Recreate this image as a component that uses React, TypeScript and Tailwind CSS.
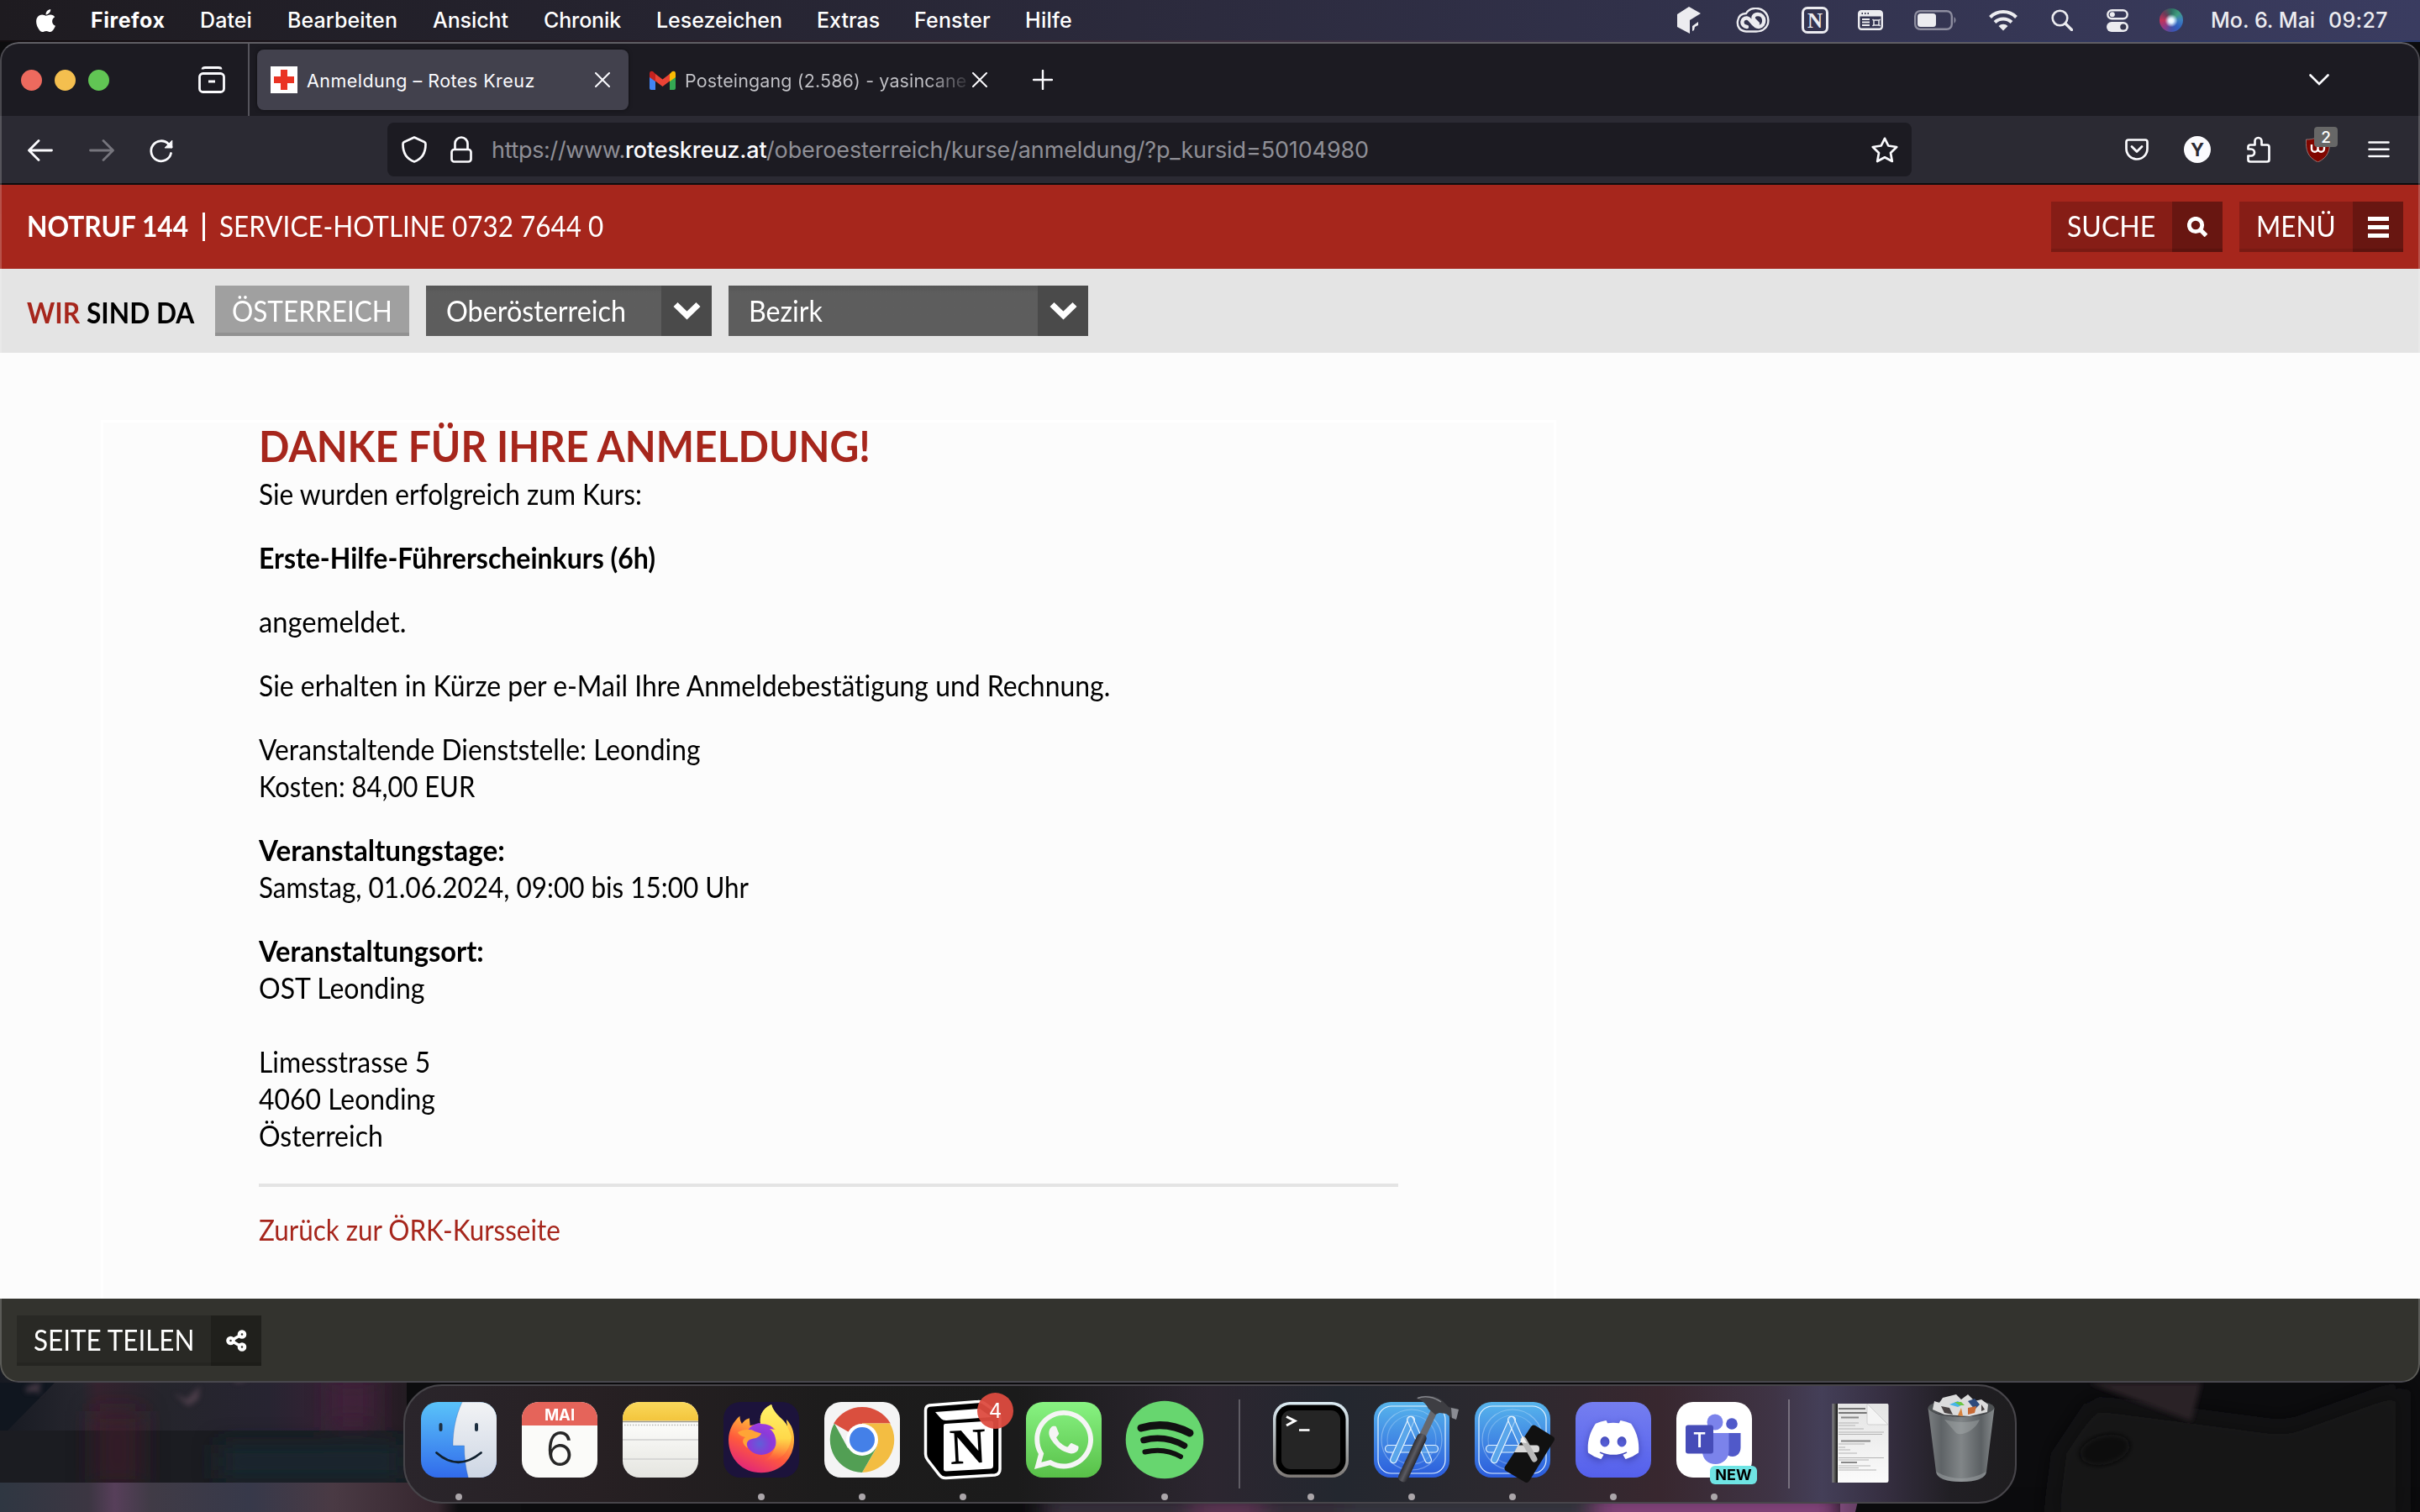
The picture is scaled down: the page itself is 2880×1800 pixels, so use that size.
import React from "react";
import { FaApple, FaDiscord, FaWhatsapp } from "react-icons/fa";

type KidsProps = { className?: string; children?: React.ReactNode };

/* A single line of the site's slightly condensed type. */
function Txt({ className = "", children }: KidsProps) {
  return <span className={`block origin-left whitespace-pre [font-variant-ligatures:none] ${className}`}>{children}</span>;
}

function MenuBar() {
  return (
    <div className="flex h-12 shrink-0 items-center justify-between bg-linear-to-r from-[#1e1b20] via-[#2c2b3e] to-[#3a3c60] pr-[38px] pl-[40px] font-['Inter',sans-serif] text-[25px] leading-[45px] font-medium text-white">
      <div className="flex h-[45px] items-center">
        <FaApple className="mr-[39px] h-[31px] w-[29px] text-white" />
        <div className="flex gap-[42px] whitespace-pre">
          <span className="w-[88px] font-bold tracking-[0.55px]">Firefox</span>
          <span className="w-[62px] tracking-[0.1px]">Datei</span>
          <span className="w-[131px] tracking-[0.1px]">Bearbeiten</span>
          <span className="w-[90px] tracking-[-0.07px]">Ansicht</span>
          <span className="w-[92px] tracking-[-0.14px]">Chronik</span>
          <span className="w-[149px] tracking-[-0.03px]">Lesezeichen</span>
          <span className="w-[74px]">Extras</span>
          <span className="w-[90px] tracking-[0.19px]">Fenster</span>
          <span className="w-[56px] tracking-[0.26px]">Hilfe</span>
        </div>
      </div>
      <div className="flex h-[46px] items-center text-[#ececf0]">
        <svg viewBox="0 0 28 32" className="mr-[42px] h-8 w-7" fill="currentColor">
          <path d="M0 9 L14 0 L28 8 L15 16 L15 32 L0 24 Z" />
          <path d="M18 23 L25 18 V22 L21 24 L20 28 L18 29 Z" />
        </svg>
        <svg viewBox="0 0 40 30" className="mr-[38px] h-[30px] w-10" fill="none" stroke="currentColor">
          <path d="M12 7 C16 0 26 -1 33 4 C40 10 40 20 34 25 C31 28 28 28.5 24 28.5 H12 C4 28 1 22 2 16 C3 10 7 7 12 7 Z" strokeWidth="2.4" />
          <path d="M13 23 C5 22 6 12 13 12.500 C18 13 20 23 27 23 C36 22 35 8 26 8 C21 8 19 12 22 15 L26 19" strokeWidth="4.4" strokeLinecap="round" />
        </svg>
        <span className="mr-[35px] flex h-8 w-8 items-center justify-center rounded-[7px] border-[3px] border-current font-['Liberation_Serif',serif] text-[25px] leading-none font-bold">N</span>
        <svg viewBox="0 0 30 24" className="mr-[37px] h-6 w-[30px]">
          <rect x="1.2" y="1.2" width="27.6" height="21.6" rx="3" fill="none" stroke="currentColor" strokeWidth="2.4" />
          <path d="M1 7.5 V4 A3 3 0 0 1 4 1 H26 A3 3 0 0 1 29 4 V7.5 Z" fill="currentColor" />
          <path d="M5 11 H14 M5 14.5 H14 M5 18 H14" stroke="currentColor" strokeWidth="1.8" />
          <path d="M19 12 h6 v6 h-6 z M17.5 11 l2 2 M26.500 11 l-2 2 M17.500 19 l2 -2 M26.500 19 l-2 -2" fill="none" stroke="currentColor" strokeWidth="1.5" />
          <path d="M4.500 4 h1.500 M8 4 h1.500 M11.500 4 h1.500" stroke="#34344c" strokeWidth="2" />
        </svg>
        <svg viewBox="0 0 51 24" className="mr-[38px] h-6 w-[51px]">
          <rect x="1.200" y="1.200" width="43.600" height="21.600" rx="6" fill="none" stroke="#8d8d9f" strokeWidth="2.400" />
          <rect x="4" y="4" width="22" height="16" rx="3.500" fill="currentColor" />
          <path d="M47.500 8 a5 5 0 0 1 0 8 z" fill="#8d8d9f" />
        </svg>
        <svg viewBox="0 0 34 25" className="mr-[40px] h-[25px] w-[34px]" fill="none" stroke="currentColor" strokeWidth="4">
          <path d="M1.500 8.500 A22 22 0 0 1 32.500 8.500" />
          <path d="M7 14.500 A14.500 14.500 0 0 1 27 14.500" />
          <path d="M17 24.500 L11.500 19 A7.800 7.800 0 0 1 22.500 19 Z" fill="currentColor" stroke="none" />
        </svg>
        <svg viewBox="0 0 26 26" className="mr-[40px] h-[26px] w-[26px]" fill="none" stroke="currentColor" strokeWidth="2.600">
          <circle cx="10.500" cy="10.500" r="8.800" />
          <path d="M17 17 L24.500 24.500" strokeLinecap="round" strokeWidth="3.200" />
        </svg>
        <svg viewBox="0 0 26 27" className="mr-[37px] h-[27px] w-[26px]">
          <rect x="1.300" y="1.300" width="23.400" height="10" rx="5" fill="none" stroke="currentColor" strokeWidth="2.400" />
          <circle cx="6.800" cy="6.300" r="3" fill="currentColor" />
          <rect x="0" y="15" width="26" height="12" rx="6" fill="currentColor" />
          <circle cx="19.800" cy="21" r="3.600" fill="#36374f" />
        </svg>
        <span className="mr-[33px] size-7 rounded-full bg-[radial-gradient(circle_at_50%_52%,#fff_0%,#dff2ff_14%,transparent_38%),conic-gradient(#2f6d63,#3f9e7e,#3d7fc0,#2f5fc0,#4550a8,#903a86,#c2335a,#6b3b58,#2f6d63)]" />
        <span className="mr-[15px] w-[125px] leading-[45px] whitespace-pre">Mo. 6. Mai</span>
        <span className="w-[71px] leading-[45px] tracking-[0.37px]">09:27</span>
      </div>
    </div>
  );
}

function Cross() {
  return (
    <svg viewBox="0 0 18 18" className="size-[18px] shrink-0" stroke="currentColor" strokeWidth="2" strokeLinecap="round">
      <path d="M1 1 L17 17 M17 1 L1 17" />
    </svg>
  );
}

function TabBar() {
  return (
    <div className="flex h-[86px] shrink-0 items-center bg-[#1c1b22] pl-[25px] font-['Inter',sans-serif] text-[21.5px] text-[#fbfbfe]">
      <div className="flex gap-[15px]">
        <span className="size-[25px] rounded-full bg-[#ed6a5e]" />
        <span className="size-[25px] rounded-full bg-[#f4bf4f]" />
        <span className="size-[25px] rounded-full bg-[#61c554]" />
      </div>
      <svg viewBox="0 0 32 32" className="ml-[106px] h-8 w-8" fill="none" stroke="currentColor" strokeWidth="2.800">
        <path d="M5 3.500 Q5 1.500 8 1.500 H24 Q27 1.500 27 3.500" />
        <rect x="1.500" y="8.500" width="29" height="22" rx="4" />
        <path d="M12 18 H20" strokeWidth="3.200" />
      </svg>
      <span className="ml-[27px] h-full w-[2px] bg-[#55545c]" />
      <div className="ml-[9px] flex h-[72px] w-[442px] items-center rounded-lg bg-[#42414d] pr-[22px] pl-[16px] shadow-[0_0_4px_rgba(0,0,0,0.5)]">
        <svg viewBox="0 0 32 32" className="size-8">
          <rect width="32" height="32" fill="#fff" />
          <path d="M12 4 H20 V12 H28 V20 H20 V28 H12 V20 H4 V12 H12 Z" fill="#ea3323" />
        </svg>
        <span className="mt-[3px] ml-[11px] w-[271px] grow whitespace-pre tracking-[0.46px]">Anmeldung – Rotes Kreuz</span>
        <Cross />
      </div>
      <svg viewBox="0 0 31 23" className="ml-[25px] h-[23px] w-[31px]">
        <path d="M0 3 V21 Q0 23 2 23 H7 V9 Z" fill="#4285f4" />
        <path d="M31 3 V21 Q31 23 29 23 H24 V9 Z" fill="#34a853" />
        <path d="M24 4 L27 1 Q31 -0.500 31 4 V8 L24 13 Z" fill="#fbbc04" />
        <path d="M7 4 L15.500 10.500 L24 4 V12.500 L15.500 19 L7 12.500 Z" fill="#ea4335" />
        <path d="M7 4 L4 1 Q0 -0.500 0 4 V8 L7 13 Z" fill="#c5221f" />
      </svg>
      <span className="mt-[3px] ml-[11px] w-[338px] bg-linear-to-r from-[#c3c3c8] from-85% to-[#c3c3c8]/10 bg-clip-text whitespace-pre text-transparent tracking-[0.12px]">
        Posteingang (2.586) - yasincane
      </span>
      <span className="ml-[4px] flex"><Cross /></span>
      <svg viewBox="0 0 24 24" className="ml-[54px] size-6" stroke="currentColor" strokeWidth="2.400" strokeLinecap="round">
        <path d="M12 1 V23 M1 12 H23" />
      </svg>
      <svg viewBox="0 0 24 14" className="mr-[108px] ml-auto h-[14px] w-6" fill="none" stroke="currentColor" strokeWidth="2.600" strokeLinecap="round">
        <path d="M1.500 1.500 L12 12 L22.500 1.500" />
      </svg>
    </div>
  );
}

function NavBar() {
  return (
    <div className="flex h-20 shrink-0 items-center bg-[#2b2a33] pr-[36px] pl-[33px] font-['Inter',sans-serif] text-[27px] text-[#fbfbfe]">
      <svg viewBox="0 0 30 26" className="mt-[2px] h-[26px] w-[30px]" fill="none" stroke="currentColor" strokeWidth="2.800" strokeLinecap="round" strokeLinejoin="round">
        <path d="M13 1.500 L1.500 13 L13 24.500 M2 13 H28.500" />
      </svg>
      <svg viewBox="0 0 30 26" className="mt-[2px] ml-[43px] h-[26px] w-[30px] text-[#76757d]" fill="none" stroke="currentColor" strokeWidth="2.800" strokeLinecap="round" strokeLinejoin="round">
        <path d="M17 1.500 L28.500 13 L17 24.500 M28 13 H1.500" />
      </svg>
      <svg viewBox="0 0 30 30" className="mt-[3px] ml-[41px] size-[30px]" fill="none" stroke="currentColor" strokeWidth="2.800" strokeLinecap="round">
        <path d="M26.500 17.500 A12 12 0 1 1 23.500 6.500 L27 10" />
        <path d="M27.800 2.500 V11 H19.500 Z" fill="currentColor" strokeWidth="1" />
      </svg>
      <div className="ml-[254px] flex h-16 w-[1814px] items-center rounded-lg bg-[#1c1b22] pr-[16px] pl-[17px]">
        <svg viewBox="0 0 30 32" className="h-8 w-[30px]" fill="none" stroke="currentColor" strokeWidth="2.700" strokeLinejoin="round">
          <path d="M15 1.500 L27 7 Q28.500 7.800 28.500 9.500 C28.500 19 25 27 15 30.500 C5 27 1.500 19 1.500 9.500 Q1.500 7.800 3 7 Z" />
        </svg>
        <svg viewBox="0 0 26 32" className="ml-[28px] h-8 w-[26px]" fill="none" stroke="currentColor" strokeWidth="2.700">
          <rect x="1.500" y="16" width="23" height="14.500" rx="3" />
          <path d="M5.500 16 V9 A7.500 7.500 0 0 1 20.500 9 V16" />
        </svg>
        <div className="mt-[3px] ml-[23px] flex grow whitespace-pre text-[#8f8f96]">
          <span className="w-[159px] tracking-[-0.34px]">https://www.</span>
          <span className="w-[168px] font-medium tracking-[-0.15px] text-[#fbfbfe]">roteskreuz.at</span>
          <span className="tracking-[-0.13px]">/oberoesterreich/kurse/anmeldung/?p_kursid=50104980</span>
        </div>
        <svg viewBox="0 0 32 31" className="h-[31px] w-8" fill="none" stroke="currentColor" strokeWidth="2.700" strokeLinejoin="round">
          <path d="M16 1.800 L20.300 10.500 L30.200 12 L23 19 L24.800 29 L16 24.300 L7.200 29 L9 19 L1.800 12 L11.700 10.500 Z" />
        </svg>
      </div>
      <svg viewBox="0 0 28 26" className="ml-auto h-[26px] w-7" fill="none" stroke="currentColor" strokeWidth="2.700" strokeLinecap="round" strokeLinejoin="round">
        <path d="M4 1.500 H24 Q26.500 1.500 26.500 4 V12 A12.500 12.500 0 0 1 1.500 12 V4 Q1.500 1.500 4 1.500 Z M8 9.500 L14 15.500 L20 9.500" />
      </svg>
      <span className="ml-[42px] flex size-8 items-center justify-center rounded-full bg-[#fbfbfe] text-[22px] leading-none font-bold text-[#2b2a33]">Y</span>
      <svg viewBox="0 0 28 32" className="ml-[43px] h-8 w-7" fill="none" stroke="currentColor" strokeWidth="2.700" strokeLinejoin="round">
        <path d="M9.500 10.500 V6 A4 4 0 0 1 17.500 6 V10.500 H24 Q26.500 10.500 26.500 13 V28 Q26.500 30.500 24 30.500 H4 Q1.500 30.500 1.500 28 V23.500 H5 A4 4 0 0 0 5 15.500 H1.500 V13 Q1.500 10.500 4 10.500 Z" />
      </svg>
      <div className="relative ml-[42px] h-[30px] w-[29px]">
        <svg viewBox="0 0 29 30" className="h-[30px] w-[29px]">
          <path d="M14.500 0 C19 2.500 24 3.200 28.500 3 C29 16 27 24 14.500 30 C2 24 0 16 0.500 3 C5 3.200 10 2.500 14.500 0 Z" fill="#800600" stroke="#9a8a8c" strokeWidth="0.800" />
          <path d="M7 9 V14 A3.700 3.700 0 0 0 14.500 14 V9 M14.500 14 A3.700 3.700 0 0 0 22 14 V12" fill="none" stroke="#fff" strokeWidth="2.400" />
        </svg>
        <span className="absolute -top-[12px] left-[10px] flex h-6 w-7 items-center justify-center rounded-[4px] bg-[#676767] text-[19px] leading-none font-medium text-white">2</span>
      </div>
      <svg viewBox="0 0 26 20" className="ml-[45px] h-5 w-[26px]" stroke="currentColor" strokeWidth="2.600" strokeLinecap="round">
        <path d="M1.500 1.500 H24.500 M1.500 9.800 H24.500 M1.500 18 H24.500" />
      </svg>
    </div>
  );
}

function SiteHeader() {
  return (
    <>
      <div className="flex h-[100px] shrink-0 items-center justify-between bg-[#a6261c] pr-5 pl-8 text-white">
        <div className="mt-[-5px] flex h-[40px] items-center leading-[40px]">
          <Txt className="w-[192px] scale-x-[0.906] font-bold">NOTRUF 144</Txt>
          <span className="mx-[17px] mt-1 h-[34px] w-[3px] bg-white" />
          <Txt className="w-[457px] scale-x-[0.898]">SERVICE-HOTLINE 0732 7644 0</Txt>
        </div>
        <div className="flex gap-5 leading-[56px]">
          <div className="flex h-[60px]">
            <div className="h-full w-[144px] border-b-4 border-[#791a13] bg-[#861d16] pl-[19px]">
              <Txt className="scale-x-[0.915]">SUCHE</Txt>
            </div>
            <div className="flex h-full w-[60px] items-center justify-center border-b-4 border-[#5c130e] bg-[#681611] pt-1">
              <svg viewBox="0 0 24 24" className="size-6" fill="none" stroke="#fff">
                <circle cx="10" cy="10" r="7.700" strokeWidth="4.800" />
                <path d="M15.500 15.500 L22.500 22.500" strokeWidth="5.200" />
              </svg>
            </div>
          </div>
          <div className="flex h-[60px]">
            <div className="h-full w-[135px] border-b-4 border-[#791a13] bg-[#861d16] pl-[20px]">
              <Txt className="scale-x-[0.9]">MENÜ</Txt>
            </div>
            <div className="flex h-full w-[60px] flex-col items-center justify-center gap-[5px] border-b-4 border-[#5c130e] bg-[#681611] pt-1">
              <span className="h-[5px] w-[25px] bg-white" />
              <span className="h-[5px] w-[25px] bg-white" />
              <span className="h-[5px] w-[25px] bg-white" />
            </div>
          </div>
        </div>
      </div>
      <div className="flex h-[100px] shrink-0 items-center bg-[#e4e4e4] pl-8 leading-[60px] text-white">
        <div className="mt-[2px] flex font-bold">
          <Txt className="w-[71px] scale-x-[0.905] text-[#a6261c]">WIR</Txt>
          <Txt className="w-[153px] scale-x-[0.905] text-black">SIND DA</Txt>
        </div>
        <div className="h-[60px] w-[231px] border-b-4 border-[#919191] bg-[#a0a0a0] pl-[20px] leading-[58px]">
          <Txt className="scale-x-[0.901]">ÖSTERREICH</Txt>
        </div>
        <Select text="Oberösterreich" className="ml-5 w-[340px]" scale="scale-x-[0.924]" />
        <Select text="Bezirk" className="ml-5 w-[428px]" scale="scale-x-[0.92]" />
      </div>
    </>
  );
}

function Select({ text, className, scale }: { text: string; className: string; scale: string }) {
  return (
    <div className={`flex h-[60px] justify-between bg-linear-to-b from-[#565656] to-[#5d5d5d] to-15% leading-[58px] ${className}`}>
      <Txt className={`pl-[26px] ${scale}`}>{text}</Txt>
      <span className="flex h-full w-[60px] items-center justify-center bg-[#4a4a4a]">
        <svg viewBox="0 0 33 22" className="h-[22px] w-[33px]" fill="none" stroke="#fff" strokeWidth="7.200">
          <path d="M3 3.500 L16.500 16.500 L30 3.500" />
        </svg>
      </span>
    </div>
  );
}

function Content() {
  return (
    <div className="h-[1126px] shrink-0 bg-[#fcfcfc] pt-20 pl-[120px]">
      <div className="h-full w-[1732px] border-3 border-b-0 border-white bg-[#fcfcfc] pr-[185px] pl-[185px] text-black">
        <h1 className="-mt-[3px] h-[65px] text-[52px] leading-[60px] font-bold text-[#a6261c]">
          <Txt className="scale-x-[0.922]">DANKE FÜR IHRE ANMELDUNG!</Txt>
        </h1>
        <div className="flex flex-col gap-8 leading-[44px]">
          <Txt className="scale-x-[0.904]">Sie wurden erfolgreich zum Kurs:</Txt>
          <Txt className="scale-x-[0.914] font-bold">Erste-Hilfe-Führerscheinkurs (6h)</Txt>
          <Txt className="scale-x-[0.935]">angemeldet.</Txt>
          <Txt className="scale-x-[0.912]">Sie erhalten in Kürze per e-Mail Ihre Anmeldebestätigung und Rechnung.</Txt>
          <div>
            <Txt className="scale-x-[0.907]">Veranstaltende Dienststelle: Leonding</Txt>
            <Txt className="scale-x-[0.884]">Kosten: 84,00 EUR</Txt>
          </div>
          <div>
            <Txt className="scale-x-[0.949] font-bold">Veranstaltungstage:</Txt>
            <Txt className="scale-x-[0.899]">Samstag, 01.06.2024, 09:00 bis 15:00 Uhr</Txt>
          </div>
          <div>
            <Txt className="scale-x-[0.933] font-bold">Veranstaltungsort:</Txt>
            <Txt className="scale-x-[0.915]">OST Leonding</Txt>
            <Txt className="mt-[44px] scale-x-[0.91]">Limesstrasse 5</Txt>
            <Txt className="scale-x-[0.911]">4060 Leonding</Txt>
            <Txt className="scale-x-[0.914]">Österreich</Txt>
          </div>
        </div>
        <hr className="mt-[36px] mb-[28px] h-1 border-0 bg-[#e4e4e4]" />
        <a className="block leading-[44px] text-[#a6261c]">
          <Txt className="scale-x-[0.898]">Zurück zur ÖRK-Kursseite</Txt>
        </a>
      </div>
    </div>
  );
}

function SiteFooter() {
  return (
    <div className="flex h-[98px] shrink-0 items-start bg-[#33332e] pt-5 pl-5 leading-[57px] text-white">
      <div className="h-[60px] w-[231px] border-b-4 border-[#252521] bg-[#292925] pl-[20px]">
        <Txt className="scale-x-[0.897]">SEITE TEILEN</Txt>
      </div>
      <div className="flex h-[60px] w-[60px] items-center justify-center border-b-4 border-[#1d1d19] bg-[#20201c] pt-1">
        <svg viewBox="0 0 25 26" className="h-[26px] w-[25px]" fill="none" stroke="#fff" strokeWidth="4">
          <path d="M19 5.500 L6 13 L19 20.500" strokeWidth="3.600" />
          <circle cx="19" cy="5.500" r="3.300" fill="#33332e" />
          <circle cx="19" cy="20.500" r="3.300" fill="#33332e" />
          <circle cx="5.500" cy="13" r="3.300" fill="#33332e" />
        </svg>
      </div>
    </div>
  );
}

/* Blurred night-city wallpaper visible beneath the window. */
function Wallpaper() {
  return (
    <svg viewBox="0 0 2880 180" preserveAspectRatio="none" className="absolute inset-x-0 bottom-0 h-[180px] w-full">
      <defs>
        <filter id="soft" x="-20%" y="-20%" width="140%" height="140%"><feGaussianBlur stdDeviation="14" /></filter>
        <filter id="tiny"><feGaussianBlur stdDeviation="3" /></filter>
        <linearGradient id="band" x1="0" x2="1">
          <stop offset="0" stopColor="#171a22" /><stop offset="0.2" stopColor="#26262e" /><stop offset="0.24" stopColor="#35232f" />
          <stop offset="0.4" stopColor="#25252c" /><stop offset="0.66" stopColor="#272431" /><stop offset="0.86" stopColor="#3a2135" /><stop offset="1" stopColor="#231c22" />
        </linearGradient>
        <linearGradient id="low" x1="0" x2="1">
          <stop offset="0" stopColor="#2f3742" /><stop offset="0.17" stopColor="#3c3642" /><stop offset="0.22" stopColor="#573f5a" />
          <stop offset="0.29" stopColor="#403b46" /><stop offset="0.48" stopColor="#37394a" /><stop offset="0.64" stopColor="#4a3a44" /><stop offset="0.84" stopColor="#35262e" /><stop offset="0.88" stopColor="#0e0e10" />
        </linearGradient>
      </defs>
      <rect width="2880" height="180" fill="#0c0c0e" />
      <rect width="484" height="90" fill="url(#band)" />
      <path d="M0 26 H65 L8 84 H0 Z" fill="#10161f" />
      <rect y="83" width="500" height="62" fill="#1b1c21" />
      <g filter="url(#soft)">
        <rect x="110" y="60" width="60" height="90" fill="#3d1c27" opacity="0.700" />
        <rect x="260" y="100" width="220" height="40" fill="#1b2730" opacity="0.900" />
        <rect x="395" y="20" width="50" height="55" fill="#42223c" opacity="0.800" />
      </g>
      <rect y="145" width="620" height="35" fill="url(#low)" />
      <g fill="#5d4a57" filter="url(#tiny)" opacity="0.700">
        <path d="M206 38 L222 46 L238 30 L236 46 L224 54 Z" />
        <path d="M278 22 Q288 14 297 18 Q292 26 280 26 Z" />
        <path d="M30 32 L40 28 L50 26 L46 34 L50 40 L40 36 L32 38 Z" />
      </g>
      <g filter="url(#soft)">
        <rect x="1240" y="160" width="360" height="40" fill="#3a3040" />
        <rect x="1420" y="166" width="80" height="30" fill="#6a3a5e" />
        <rect x="1600" y="160" width="300" height="40" fill="#3a3a44" />
        <rect x="1900" y="158" width="290" height="40" fill="#8f4a86" />
      </g>
      <path d="M2190 168 H2215 L2208 180 H2190 Z" fill="#a0609c" opacity="0.600" />
      <path d="M2215 150 H2880 V180 H2208 Z" fill="#0b0b0d" />
      <path d="M2450 110 L2490 50 L2720 80 L2860 30 V190 H2440 Z" fill="#121214" filter="url(#soft)" />
      <path d="M2485 26 L2620 26 L2608 72 Z" fill="#292027" filter="url(#tiny)" />
      <ellipse cx="2505" cy="106" rx="30" ry="17" fill="#0a0a0b" filter="url(#tiny)" transform="rotate(-14 2505 106)" />
    </svg>
  );
}

function DockItem({ dot, children }: { dot?: boolean; children: React.ReactNode }) {
  return (
    <div className="relative flex h-full w-[120px] shrink-0 flex-col items-center pt-[14px]">
      <div className="relative size-[100px]">{children}</div>
      {dot && <span className="mt-[14px] size-2 rounded-full bg-[#aba6aa]" />}
    </div>
  );
}

const icon = "block size-[100px] overflow-visible";

function FinderIcon() {
  return (
    <svg viewBox="0 0 100 100" className={icon}>
      <defs>
        <linearGradient id="fb" x2="0" y2="1"><stop stopColor="#5cc8fa" /><stop offset="1" stopColor="#2f66ea" /></linearGradient>
        <linearGradient id="fw" x2="0" y2="1"><stop stopColor="#f2f3f5" /><stop offset="1" stopColor="#cdd6e4" /></linearGradient>
        <clipPath id="tile"><rect x="5" y="5" width="90" height="90" rx="20" /></clipPath>
      </defs>
      <g clipPath="url(#tile)">
        <rect width="100" height="100" fill="url(#fb)" />
        <path d="M54 5 C46 22 43 40 43 57 H56.500 Q56.500 78 61.500 96 H100 V5 Z" fill="url(#fw)" stroke="#2458a8" strokeOpacity="0.400" strokeWidth="0.800" />
      </g>
      <path d="M28.500 32 V38 M71 32 V38" stroke="#1d2f40" strokeWidth="4" strokeLinecap="round" />
      <path d="M23.500 65.500 Q49 88 76.500 65.500" fill="none" stroke="#10202e" strokeWidth="2.800" strokeLinecap="round" />
    </svg>
  );
}

function CalendarIcon() {
  return (
    <svg viewBox="0 0 100 100" className={icon} fontFamily="Inter, sans-serif" textAnchor="middle">
      <g clipPath="url(#tile)">
        <rect width="100" height="100" fill="#fbfbf9" />
        <rect width="100" height="33" fill="#e5645a" />
      </g>
      <text x="50" y="26.500" fontSize="18.500" fontWeight="700" fill="#fff">MAI</text>
      <text x="50" y="81" fontSize="56" fontWeight="300" fill="#262626">6</text>
    </svg>
  );
}

function NotesIcon() {
  return (
    <svg viewBox="0 0 100 100" className={icon}>
      <defs>
        <linearGradient id="ny" x2="0" y2="1"><stop stopColor="#fbdc62" /><stop offset="1" stopColor="#f3c53c" /></linearGradient>
        <linearGradient id="nw" x2="0" y2="1"><stop offset="0.300" stopColor="#fcfcfa" /><stop offset="1" stopColor="#e3e3de" /></linearGradient>
      </defs>
      <g clipPath="url(#tile)">
        <rect width="100" height="100" fill="url(#nw)" />
        <rect width="100" height="27.500" fill="url(#ny)" />
        <path d="M5 28.500 H95" stroke="#9c9a92" strokeWidth="1.500" />
        <path d="M7 32.500 H95" stroke="#b5b5b2" strokeWidth="1.500" strokeDasharray="1.500 1.800" />
        <path d="M5 50 H95 M5 73 H95" stroke="#cfcfd0" strokeWidth="1.500" />
      </g>
    </svg>
  );
}

function FirefoxIcon() {
  return (
    <svg viewBox="0 0 100 100" className={icon}>
      <defs>
        <linearGradient id="ff" x1="0.750" y1="0" x2="0.300" y2="1">
          <stop stopColor="#fff05a" /><stop offset="0.350" stopColor="#ffb13a" /><stop offset="0.650" stopColor="#ff5a3c" /><stop offset="1" stopColor="#e0247c" />
        </linearGradient>
        <linearGradient id="fy" x1="0.500" y1="0" x2="0.500" y2="1">
          <stop stopColor="#fff36a" /><stop offset="0.600" stopColor="#ffd84a" /><stop offset="1" stopColor="#ff9a3a" stopOpacity="0" />
        </linearGradient>
        <radialGradient id="fg" cx="0.450" cy="0.650" r="0.700"><stop stopColor="#5f5fd8" /><stop offset="0.500" stopColor="#8a3ad8" /><stop offset="1" stopColor="#a23be0" /></radialGradient>
      </defs>
      <rect x="5" y="5" width="90" height="90" rx="20" fill="#1c133b" />
      <path d="M62 8 C50 14 48 22 49 31 L36.600 33 L35.800 24.300 C31 26 29 28 27 31 C25 28 24.500 25 24.400 21.700 C17 28 11 38 11 50 C11 73 28 89.300 50 89.300 C73 89.300 89 72 89 50 C89 40 86 32 80 26 C80 30 81 32 81 34 C77 25 65 20 62 8 Z" fill="url(#ff)" />
      <circle cx="50" cy="49" r="19" fill="url(#fg)" />
      <path d="M62 8 C50 14 48 22 49 31 C58 31 64 34 67 38 L60 37 C67 42 69 52 66 60 C63 68 58 72 54 75 C70 78 84 66 86 46 L81 34 C77 25 65 20 62 8 Z" fill="url(#fy)" />
      <path d="M22 41 C30 37 38 37 42 40 L50 42.500 C48 47 44 48 39 49 C32 51 32 55 34 60 C28 56 26 50 31 47 C26 46 23 44 22 41 Z" fill="#ffa436" />
    </svg>
  );
}

function ChromeIcon() {
  return (
    <svg viewBox="0 0 100 100" className={icon}>
      <rect x="5" y="5" width="90" height="90" rx="20" fill="#f4f4f4" />
      <path d="M50 50 L16.200 30.500 A39 39 0 0 1 83.800 30.500 L50 30.500 Z" fill="#da4f3e" />
      <path d="M83 30.500 A39 39 0 0 1 50 89 L67 60 L50 50 V30.500 Z" fill="#f3bd42" />
      <path d="M17 30.500 A39 39 0 0 0 50 89 L66.900 59.800 L50 50 L33 60 Z" fill="#529f54" />
      <circle cx="50" cy="50" r="19" fill="#fff" />
      <circle cx="50" cy="50" r="15" fill="#4480e8" />
    </svg>
  );
}

function NotionIcon() {
  return (
    <>
      <svg viewBox="0 0 100 100" className={icon}>
        <path d="M10 9 L68 4.500 Q72 4 76 7 L90 17 Q94 19 94 24 V85 Q94 91 88 92 L30 95.500 Q25 96 22 92 L8 74 Q5.500 71 5.500 67 V15 Q5.500 10 10 9 Z" fill="#000" stroke="#fff" strokeWidth="3.500" />
        <path d="M17 17 L70 13 L84 23 L30 27 Q26 27 24 25 Z" fill="#fff" />
        <path d="M29 31 L83 27.500 Q86 27.500 86 30 V81 Q86 84 83 84.500 L30 87.500 Q27 87.500 27 85 V33 Q27 31 29 31 Z" fill="#fff" />
        <text x="56" y="78" textAnchor="middle" fontFamily="Liberation Serif, serif" fontWeight="700" fontSize="60" fill="#000" transform="rotate(-3 56 60)">N</text>
      </svg>
      <span className="absolute -top-[6px] left-[67px] flex size-[43px] items-center justify-center rounded-full bg-[#dd4b3f]/95 font-['Inter',sans-serif] text-[24px] text-white">4</span>
    </>
  );
}

function WhatsAppIcon() {
  return (
    <div className="m-[5px] flex size-[90px] items-center justify-center rounded-[20px] bg-linear-to-b from-[#88f382] to-[#58c048]">
      <FaWhatsapp className="size-[80px] text-[#f5f5f5]" />
    </div>
  );
}

function SpotifyIcon() {
  return (
    <svg viewBox="0 0 100 100" className={icon}>
      <circle cx="50" cy="50" r="46.300" fill="#67d66f" />
      <g fill="none" stroke="#111" strokeLinecap="round">
        <path d="M22 36 Q52 27 80 42" strokeWidth="9" />
        <path d="M25 50.500 Q50 44 73.500 57" strokeWidth="7.500" />
        <path d="M26.500 64.500 Q50 59 69 70" strokeWidth="6" />
      </g>
    </svg>
  );
}

function TerminalIcon() {
  return (
    <svg viewBox="0 0 100 100" className={icon}>
      <defs><linearGradient id="tg" x2="0" y2="1"><stop stopColor="#dcecf4" /><stop offset="1" stopColor="#7d7875" /></linearGradient></defs>
      <rect x="5" y="5" width="90" height="90" rx="20" fill="url(#tg)" />
      <rect x="8.500" y="8.500" width="83" height="83" rx="17" fill="#000" />
      <rect x="15" y="15" width="70" height="70" rx="11" fill="#252525" />
      <path d="M21 22.500 L31 27.500 L21 33" fill="none" stroke="#fff" strokeWidth="3" />
      <path d="M36 38.500 H48.500" stroke="#fff" strokeWidth="2.600" />
    </svg>
  );
}

function Blueprint({ id }: { id: string }) {
  return (
    <>
      <defs>
        <linearGradient id={id} x2="0" y2="1"><stop stopColor="#57b5ec" /><stop offset="1" stopColor="#2a5bdc" /></linearGradient>
      </defs>
      <rect x="5" y="5" width="90" height="90" rx="20" fill={`url(#${id})`} />
      <g fill="none" stroke="#e4f3ff" strokeWidth="1.200">
        <rect x="10" y="10" width="80" height="80" rx="16" />
        <circle cx="50" cy="50" r="36" strokeOpacity="0.350" />
        <circle cx="50" cy="50" r="29" strokeOpacity="0.250" />
        <rect x="18.500" y="56.500" width="63" height="8.500" rx="4.250" fill="#4f93e6" />
        <rect x="-3.800" y="-30" width="7.600" height="60" rx="3.800" transform="translate(39 50) rotate(24)" fill="#5aa6ea" />
        <rect x="-3.800" y="-30" width="7.600" height="60" rx="3.800" transform="translate(59 50) rotate(-24)" fill="#5aa6ea" fillOpacity="0.500" />
      </g>
    </>
  );
}

function XcodeIcon() {
  return (
    <svg viewBox="0 0 100 100" className={icon}>
      <defs><linearGradient id="hm"><stop stopColor="#2e2e33" /><stop offset="0.500" stopColor="#5b5b62" /><stop offset="1" stopColor="#26262b" /></linearGradient></defs>
      <Blueprint id="xb" />
      <g transform="translate(58 56) rotate(25)">
        <rect x="-4" y="-46" width="8" height="40" fill="#66686e" />
        <rect x="-6" y="-14" width="12" height="62" rx="5" fill="url(#hm)" />
      </g>
      <path d="M55 1 C64 -5 78 -3 86 3 L94 11 L105 13 L104 24 L99 25 L91 19 L83 18 L78 20 L70 13 C67 7 62 2 55 1 Z" fill="#3e3e43" />
      <path d="M97 12 L106 14 L103 26 L98 24 Z" fill="#8b8c93" />
      <path d="M57 0.500 C66 -3 77 -1 85 5" fill="none" stroke="#85868c" strokeWidth="1.500" />
    </svg>
  );
}

function SimulatorIcon() {
  return (
    <svg viewBox="0 0 100 100" className={icon}>
      <Blueprint id="sb" />
      <path d="M77 33 L98 46 Q101 48 99.500 51 L70 99 Q68 102 65 100.500 L42 87 Q39.500 85 41 82 L72 34.500 Q74 31.500 77 33 Z" fill="#111" />
      <path d="M52 65 L56.500 56.500 H79 Q82 57 82 60.700 Q82 65 79 65 Z" fill="#d8d8d8" />
      <path d="M63 50 L76 73" stroke="#b9b9b9" strokeWidth="7" strokeLinecap="round" />
      <path d="M59 53 L62 45 L67 54 Z" fill="#f0f0f0" />
    </svg>
  );
}

function DiscordIcon() {
  return (
    <div className="m-[5px] flex size-[90px] items-center justify-center rounded-[20px] bg-linear-to-b from-[#757ef0] to-[#5560ec]">
      <FaDiscord className="size-[66px] text-white drop-shadow-[0_3px_4px_rgba(30,30,120,0.5)]" />
    </div>
  );
}

function TeamsIcon() {
  return (
    <>
      <svg viewBox="0 0 100 100" className={icon}>
        <rect x="5" y="5" width="90" height="90" rx="20" fill="#fff" />
        <circle cx="71" cy="31" r="6.800" fill="#5059c9" />
        <path d="M60 42 H81.500 V59 C81.500 66 77 70 72 70 C68 70 65 68 63 66 Z" fill="#5059c9" />
        <circle cx="51" cy="29" r="9.500" fill="#7b83eb" />
        <path d="M36 42 H67.500 V63 C67.500 73 60 79 51.500 79 C43 79 36 73 36 64 Z" fill="#7b83eb" />
        <rect x="16" y="32.500" width="33" height="34" rx="3" fill="#464cb8" />
        <text x="32.500" y="58.500" textAnchor="middle" fontFamily="Open Sans, sans-serif" fontWeight="600" fontSize="25" fill="#fff">T</text>
      </svg>
      <span className="absolute top-[81px] left-[45px] flex h-[22px] w-[56px] items-center justify-center rounded-[6px] bg-[#6fe4e4] font-['Inter',sans-serif] text-[18px] leading-none font-bold text-black">NEW</span>
    </>
  );
}

function DocumentIcon() {
  return (
    <svg viewBox="0 0 100 100" className={icon}>
      <defs>
        <linearGradient id="dl"><stop stopColor="#8c8c8c" /><stop offset="1" stopColor="#050505" /></linearGradient>
        <linearGradient id="dp" x2="0" y2="1"><stop stopColor="#e4e4e4" /><stop offset="1" stopColor="#fbfbfb" /></linearGradient>
      </defs>
      <rect x="16.500" y="7" width="7" height="94" fill="url(#dl)" />
      <path d="M23 7 H82 Q83.500 7 83.500 9 V99 Q83.500 101 81 101 H23 Z" fill="url(#dp)" />
      <path d="M24 13 H56 M24 18 H58" stroke="#777" strokeWidth="2.200" />
      <path d="M27 23.500 H48 M27 51.500 H62 M27 77 H46" stroke="#888" strokeWidth="1.800" />
      <path d="M24 30 H48 M24 33 H44 M24 37 H54 M24 41 H78 M24 43.500 H76 M24 55 H55 M24 59 H32 M24 62 H38 M24 66 H46 M24 71.500 H78 M24 74 H60 M24 81 H62 M24 83.500 H48 M24 86 H69" stroke="#b4b4b4" strokeWidth="1.100" />
      <path d="M58 7 L83 32 L60 32 Q58 32 58 30 Z" fill="#f4f4f4" stroke="#c9c9c9" strokeWidth="0.800" />
    </svg>
  );
}

function TrashIcon() {
  return (
    <svg viewBox="0 0 100 100" className={icon}>
      <defs>
        <linearGradient id="tr"><stop stopColor="#7f8385" /><stop offset="0.200" stopColor="#62676a" /><stop offset="0.500" stopColor="#868b8d" /><stop offset="0.800" stopColor="#5f6467" /><stop offset="1" stopColor="#8b9092" /></linearGradient>
      </defs>
      <ellipse cx="50" cy="12" rx="39.500" ry="10" fill="#4e5254" />
      <path d="M16 14 L18 4 L24 6 L28 0 L44 -4 L50 2 L58 -4 L66 4 L74 2 L82 8 L81 17 L60 22 L30 20 Z" fill="#dcdcdc" />
      <path d="M36 8 L46 4 L52 8 L46 11 Z" fill="#46b5e8" />
      <path d="M42 5 L50 5 L54 9 L48 9 Z" fill="#6cc644" />
      <path d="M58 4 L66 1 L72 8 L66 14 Z" fill="#2e4a7c" />
      <path d="M58 12 L68 10 L66 18 L58 20 Z" fill="#c86a34" />
      <path d="M26 10 L36 12 L40 20 L30 18 Z M74 8 L78 14 L74 16 Z" fill="#4a4444" />
      <path d="M50 12 L52 22 L46 21 Z" fill="#d8823c" />
      <path d="M10.500 12 C16 26 84 26 89.500 12 L80 88 Q78 100 50 100 Q22 100 20 88 Z" fill="url(#tr)" fillOpacity="0.950" />
      <path d="M30 26 C45 30 60 30 72 26 C66 40 50 46 44 42 Z" fill="#b5b9ba" opacity="0.350" />
      <path d="M20 88 Q50 104 80 88 Q78 100 50 100 Q22 100 20 88 Z" fill="#a7abac" opacity="0.450" />
    </svg>
  );
}

function Dock() {
  return (
    <div className="absolute bottom-[10px] left-[480px] flex h-[142px] w-[1920px] rounded-[46px] border-2 border-[#47454a] bg-[linear-gradient(90deg,#2a252b_0%,#272023_12%,#1d1c1c_26%,#1b1b1b_38%,#2c2630_50%,#23272f_58%,#2c292f_68%,#38272f_78%,#3f3445_85%,#443f58_88%,#352e40_92%,#211f24_96%,#1e1d1f_100%)] pl-[4px]">
      <DockItem dot><FinderIcon /></DockItem>
      <DockItem><CalendarIcon /></DockItem>
      <DockItem><NotesIcon /></DockItem>
      <DockItem dot><FirefoxIcon /></DockItem>
      <DockItem dot><ChromeIcon /></DockItem>
      <DockItem dot><NotionIcon /></DockItem>
      <DockItem><WhatsAppIcon /></DockItem>
      <DockItem dot><SpotifyIcon /></DockItem>
      <span className="mt-4 mr-[24px] ml-[28px] h-[106px] w-[2px] bg-[#5f5c64]" />
      <DockItem dot><TerminalIcon /></DockItem>
      <DockItem dot><XcodeIcon /></DockItem>
      <DockItem dot><SimulatorIcon /></DockItem>
      <DockItem dot><DiscordIcon /></DockItem>
      <DockItem dot><TeamsIcon /></DockItem>
      <span className="mt-4 mr-[24px] ml-[28px] h-[106px] w-[2px] bg-[#77707e]" />
      <DockItem><DocumentIcon /></DockItem>
      <DockItem><TrashIcon /></DockItem>
    </div>
  );
}

export default function App() {
  return (
    <div className="relative flex h-[1800px] w-[2880px] flex-col overflow-hidden bg-[#0c0c0e] font-['Lato',sans-serif] text-[35px]">
      <Wallpaper />
      <div className="relative flex flex-col">
        <MenuBar />
        <div className="h-[2px] shrink-0 bg-linear-to-r from-[#120d10] via-[#3a2c3c] to-[#2c3a6a]" />
        <div className="relative flex h-[1596px] flex-col overflow-hidden rounded-[22px] bg-[#1c1b22] pt-[2px]">
          <TabBar />
          <NavBar />
          <div className="h-[2px] shrink-0 bg-[#0c0c0d]" />
          <SiteHeader />
          <Content />
          <SiteFooter />
          <div className="pointer-events-none absolute inset-0 rounded-[22px] border-2 border-white/20 border-t-[#5f5e64]" />
        </div>
      </div>
      <Dock />
    </div>
  );
}
